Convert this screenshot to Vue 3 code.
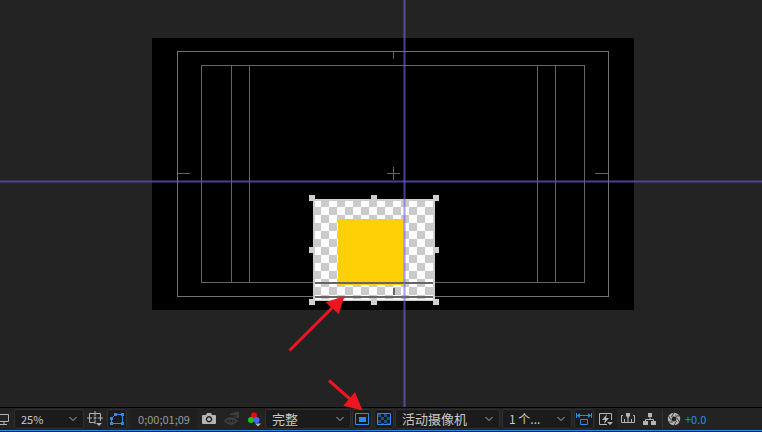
<script setup>
import { ref } from 'vue'

const zoom = ref('25%')
const resolution = ref('完整')
const camera = ref('活动摄像机')
const views = ref('1 个...')

const handles = [
  [309, 195], [371, 195], [433, 195],
  [309, 247], [433, 247],
  [309, 299], [371, 299], [433, 299],
]
const columns = [231, 249, 537, 555]
</script>

<template>
  <main class="viewer">
    <svg class="stage" viewBox="0 0 762 407" role="img" aria-label="合成预览">
      <defs>
        <pattern id="checker" x="313" y="199" width="16" height="16" patternUnits="userSpaceOnUse">
          <rect width="16" height="16" fill="#fff" />
          <path d="M8 0h8v8H8zM0 8h8v8H0z" fill="#cbcbcb" />
        </pattern>
      </defs>
      <g shape-rendering="crispEdges">
        <rect width="762" height="407" fill="#232323" />
        <rect x="152" y="38" width="482" height="272" fill="#000" />
        <g fill="#504ca6">
          <rect y="180" width="762" height="3" opacity=".46" />
          <rect y="181" width="762" height="1" opacity=".7" />
        </g>
        <g fill="none" stroke="#737373">
          <rect x="177.500" y="51.500" width="431" height="245" />
          <rect x="201.500" y="65.500" width="383" height="217" stroke="#646464" />
          <path v-for="x in columns" :key="x" :d="`M${x + 0.5} 66v216`" stroke="#646464" />
          <path d="M178 173.500h12M595 173.500h13M387 173.500h13M393.500 167v13M393.500 52v7" stroke="#646464" />
        </g>
        <rect x="313" y="199" width="122" height="102" fill="#cbcbcb" />
        <rect x="315" y="201" width="118" height="98" fill="url(#checker)" />
        <rect x="315" y="299" width="118" height="1" fill="#f3f3f3" />
        <rect x="338" y="219" width="66" height="66" fill="#ffd006" />
        <path d="M315 282h118v2H315zM315 296h118v2H315zM393 288h2v7h-2z" fill="#666" />
        <path d="M315 199h118" stroke="#d8ccd8" />
        <rect v-for="(h, i) in handles" :key="i" :x="h[0]" :y="h[1]" width="6" height="6" fill="#cfcfcf" />
        <g fill="#6c68d8">
          <rect x="403" width="3" height="407" opacity=".34" />
          <rect x="404" width="1" height="407" opacity=".42" />
        </g>
      </g>
      <g fill="#ed1520" stroke="#ed1520">
        <path d="M289.500 350.500L333 307M329 380.500L350 399" stroke-width="3" />
        <path d="M344.500 296L325.700 302.300L338.700 314.300zM362.500 410.500L355 392L343.300 405.700z" stroke="none" />
      </g>
    </svg>

    <footer class="toolbar">
      <button class="tool monitor" aria-label="始终预览此视图">
        <svg width="12" height="16" viewBox="0 0 12 16"><path d="M0 3.500h8.500v7H0M4 11v2.500M0 13.500h7" /></svg>
      </button>
      <label class="drop zoom">
        <select v-model="zoom" aria-label="放大率"><option>25%</option><option>50%</option><option>100%</option></select>
        <svg class="chevron" width="8" height="6" viewBox="0 0 8 6"><path d="M.5 1L4 4.500L7.500 1" /></svg>
      </label>
      <button class="tool" aria-label="网格和参考线">
        <svg width="18" height="16" viewBox="0 0 18 16">
          <path d="M9 11.500H3.500v-9h11V10M9 0v5M9 9v4M1 7h5M12 7h5M7.500 7h3M9 5.500v3" /><path class="solid" d="M10 12h6l-3 3z" />
        </svg>
      </button>
      <button class="tool boxed active mask" aria-label="切换蒙版和形状路径可见性">
        <svg width="16" height="16" viewBox="0 0 16 16">
          <path d="M2.500 12.500V7.500L6.500 3.500h7v9z" /><path class="solid" d="M1 6h3v3H1zM5 2h3v3H5zM12 2h3v3h-3zM12 11h3v3h-3zM1 11h3v3H1z" />
        </svg>
      </button>
      <button class="time">0;00;01;09</button>
      <button class="tool camera" aria-label="拍摄快照">
        <svg width="14" height="12" viewBox="0 0 14 12"><path class="solid" fill-rule="evenodd" d="M1 2h3l1-2h4l1 2h3q1 0 1 1v7q0 1-1 1H1q-1 0-1-1V3q0-1 1-1zM7 3a3.200 3.200 0 1 0 .1 0z" /><circle class="solid" cx="7" cy="6.300" r="1.800" /></svg>
      </button>
      <button class="tool dim" aria-label="显示快照">
        <svg width="16" height="14" viewBox="0 0 16 14"><path d="M1 9q5-6 12 0q-6 6-12 0zM6 3q2-2 4-1l1-1h3v5" stroke-width="1.500" /><circle cx="7" cy="9" r="2" /><circle cx="12" cy="4" r="1.500" /></svg>
      </button>
      <button class="tool" aria-label="显示通道及色彩管理设置">
        <svg width="16" height="16" viewBox="0 0 16 16"><circle cx="8" cy="4.500" r="3" class="red" /><circle cx="5" cy="9" r="3" class="green" /><circle cx="10.500" cy="9" r="3" class="blue" /><path class="solid" d="M9 12.500h6l-3 3z" /></svg>
      </button>
      <label class="drop resolution">
        <select v-model="resolution" class="cjk" aria-label="分辨率"><option>完整</option><option>二分之一</option></select>
        <svg class="chevron" width="8" height="6" viewBox="0 0 8 6"><path d="M.5 1L4 4.500L7.500 1" /></svg>
      </label>
      <button class="tool boxed active" aria-label="目标区域">
        <svg width="14" height="12" viewBox="0 0 14 12"><path d="M.5.5h13v11H.5z" /><path class="solid" d="M4 4h7v5H4z" /></svg>
      </button>
      <button class="tool boxed active" aria-label="切换透明网格">
        <svg width="14" height="12" viewBox="0 0 14 12"><path d="M.5.5h13v11H.5z" /><path class="tiles" d="M1 1h3v3H1zM7 1h3v3H7zM4 4h3v3H4zM10 4h3v3h-3zM1 7h3v3H1zM7 7h3v3H7zM4 10h3v1H4zM10 10h3v1h-3z" /></svg>
      </button>
      <label class="drop view">
        <select v-model="camera" class="cjk" aria-label="3D 视图"><option>活动摄像机</option><option>正面</option></select>
        <svg class="chevron" width="8" height="6" viewBox="0 0 8 6"><path d="M.5 1L4 4.500L7.500 1" /></svg>
      </label>
      <label class="drop layout">
        <select v-model="views" aria-label="选择视图布局"><option>1 个...</option><option>2 个...</option></select>
        <svg class="chevron" width="8" height="6" viewBox="0 0 8 6"><path d="M.5 1L4 4.500L7.500 1" /></svg>
      </label>
      <button class="tool boxed active" aria-label="切换像素长宽比校正">
        <svg width="16" height="14" viewBox="0 0 16 14"><path d="M1 3.500h14M.5 1v5M15.500 1v5M4.500 7.500h7v5h-7z" /><path class="solid" d="M1 3.500L4 1v5zM15 3.500L12 1v5z" /></svg>
      </button>
      <button class="tool fast" aria-label="快速预览">
        <svg width="16" height="14" viewBox="0 0 16 14"><path d="M9 12.500H1.500v-11h12V8" /><path class="solid" d="M9 2L4 8h3l-1 4l5-6H8zM9 10h6l-3 3z" /></svg>
      </button>
      <button class="tool" aria-label="时间轴">
        <svg width="14" height="14" viewBox="0 0 14 14"><path d="M2 3.500H.5v7h13v-7H12M3.500 7v3M10.500 7v3M7 5v5" /><path class="solid" d="M5 1h4v3L7 6L5 4z" /></svg>
      </button>
      <button class="tool" aria-label="合成流程图">
        <svg width="14" height="14" viewBox="0 0 14 14"><path class="solid" d="M5 1h4v4H5zM0 9h5v4H0zM8 9h5v4H8z" /><path d="M7 5v2M2.500 9V7.500h8V9" /></svg>
      </button>
      <div class="exposure">
        <button class="tool" aria-label="重置曝光度">
          <svg width="14" height="14" viewBox="0 0 14 14"><circle cx="7" cy="7" r="4.300" stroke-width="3.800" /><path class="slits" stroke-width=".8" d="M7 .5L4.500 5M12.500 4H8M12.500 10L9.500 5.500M7 13.500L9.500 9M1.500 10H6M1.500 4L4.500 8.500" /></svg>
        </button>
        <button class="value">+0.0</button>
      </div>
    </footer>
  </main>
</template>

<style>
body {
  margin: 0;
  background: #1b1b1b;
}
</style>

<style scoped>
.viewer {
  font-family: "Noto Sans CJK SC", "Noto Sans", sans-serif;
  font-size: 11px;
  color: #b4b4b4;
  overflow: hidden;
}
.stage {
  display: block;
  position: relative;
  z-index: 1;
  width: 100%;
  overflow: visible;
  pointer-events: none;
}
.toolbar {
  display: flex;
  align-items: center;
  height: 22px;
  border-top: 1px solid #000;
  border-bottom: 1px solid #2d8ceb;
  background: #232323;
}
button {
  padding: 0;
  border: 0;
  background: none;
  color: inherit;
  font: inherit;
}
.tool {
  box-sizing: border-box;
  display: flex;
  flex: none;
  align-items: center;
  justify-content: center;
  width: 22px;
  height: 20px;
}
.tool svg {
  flex: none;
}
.tool svg,
.chevron {
  fill: none;
  stroke: currentColor;
}
.tool .solid {
  fill: currentColor;
  stroke: none;
}
.tool.monitor {
  justify-content: flex-start;
  width: 14px;
}
.boxed,
.drop {
  box-sizing: border-box;
  border: 1px solid #303030;
  border-radius: 3px;
  background: #1b1b1b;
}
.tool.boxed {
  width: 20px;
  margin: 0 1px;
}
.active,
.value {
  color: #2d8ceb;
}
.tool.mask {
  margin-right: 4px;
}
.dim {
  color: #444;
}
.drop {
  display: grid;
  grid-template-columns: 1fr 14px;
  align-items: center;
  height: 20px;
}
select {
  grid-area: 1 / 1 / 2 / 3;
  box-sizing: border-box;
  width: 100%;
  height: 18px;
  padding: 0 14px 0 6px;
  border: 0;
  appearance: none;
  background: none;
  color: #c8c8c8;
  font: inherit;
  line-height: 18px;
}
.cjk {
  font-size: 13px;
}
.chevron {
  grid-area: 1 / 2;
  pointer-events: none;
}
.zoom {
  width: 70px;
}
.resolution {
  width: 86px;
}
.view {
  width: 105px;
}
.layout {
  width: 70px;
  margin: 0 1px 0 2px;
}
.layout select {
  font-size: 12px;
}
.time {
  width: 66px;
  height: 20px;
  background: #1f1f1f;
  color: #9a9a9a;
}
.tool.camera {
  width: 24px;
}
.red {
  fill: #f00;
  stroke: none;
}
.green {
  fill: #1bc416;
  stroke: none;
}
.blue {
  fill: #4169ff;
  stroke: none;
}
.tiles {
  fill: #1d4f80;
  stroke: none;
}
.fast {
  background: #1d1d1d;
}
.exposure {
  display: flex;
  align-items: center;
  margin-left: 1px;
  border-left: 1px solid #323232;
}
.tool .slits {
  stroke: #232323;
}
</style>
